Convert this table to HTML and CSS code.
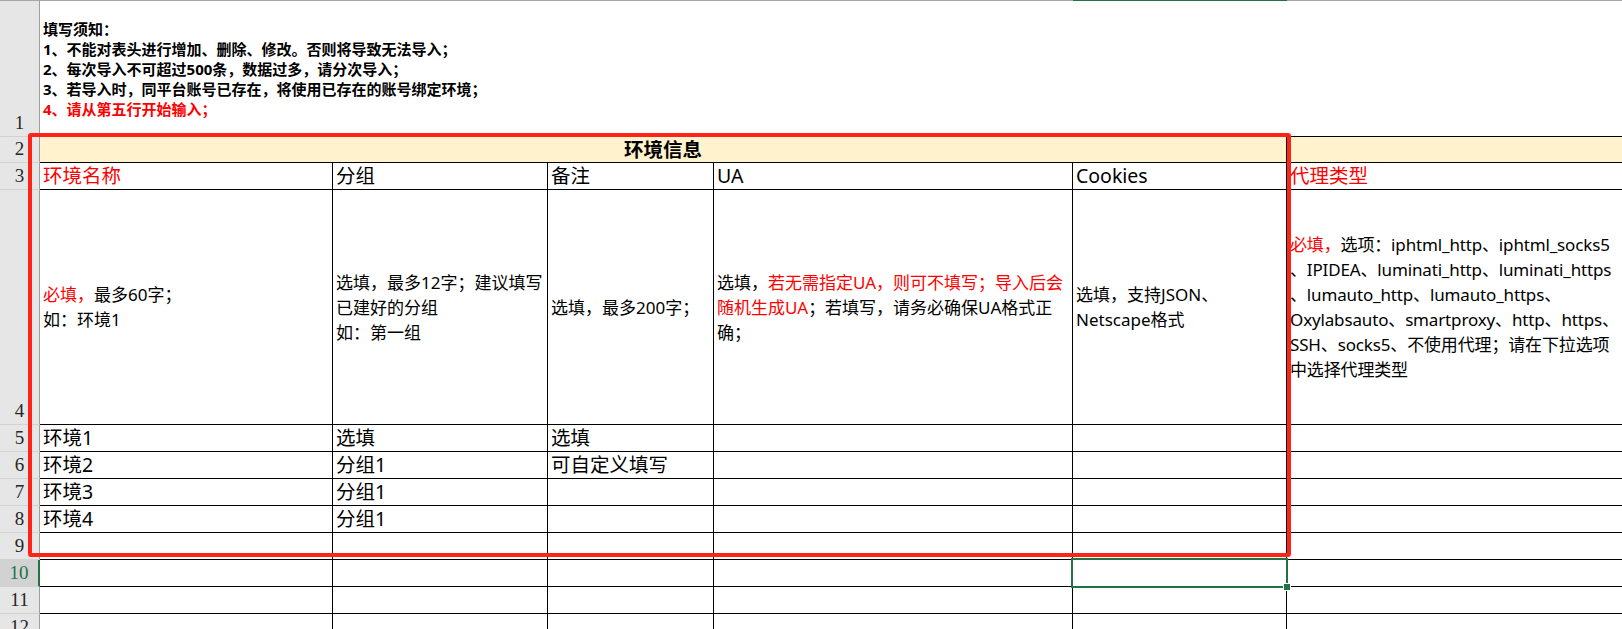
FILE: index.html
```html
<!DOCTYPE html>
<html lang="zh-CN">
<head>
<meta charset="utf-8">
<title>环境导入模板</title>
<link rel="stylesheet" href="styles.css">
</head>
<body>
<div class="sheet-wrap">
  <div class="sheet">
    <!-- column header bottom line -->
    <div class="topline"></div>
    <div class="topline"></div>
    <div class="topline"></div>
    <div class="topline"></div>
    <div class="topline"></div>
    <div class="topline sel"></div>
    <div class="topline"></div>

    <!-- row 1 -->
    <div class="rh">1</div>
    <div class="notes">
      <div>填写须知：</div>
      <div>1、不能对表头进行增加、删除、修改。否则将导致无法导入；</div>
      <div>2、每次导入不可超过500条，数据过多，请分次导入；</div>
      <div>3、若导入时，同平台账号已存在，将使用已存在的账号绑定环境；</div>
      <div class="red">4、请从第五行开始输入；</div>
    </div>

    <!-- row 2 -->
    <div class="rh">2</div>
    <div class="c title">环境信息</div>
    <div class="c fill"></div>

    <!-- row 3 -->
    <div class="rh">3</div>
    <div class="c red">环境名称</div>
    <div class="c">分组</div>
    <div class="c">备注</div>
    <div class="c">UA</div>
    <div class="c">Cookies</div>
    <div class="c red">代理类型</div>

    <!-- row 4 -->
    <div class="rh">4</div>
    <div class="c desc"><div><span class="red">必填，</span>最多60字；<br>如：环境1</div></div>
    <div class="c desc"><div>选填，最多12字；建议填写<br>已建好的分组<br>如：第一组</div></div>
    <div class="c desc"><div>选填，最多200字；</div></div>
    <div class="c desc"><div>选填，<span class="red">若无需指定UA，则可不填写；导入后会<br>随机生成UA</span>；若填写，请务必确保UA格式正<br>确；</div></div>
    <div class="c desc"><div>选填，支持JSON、<br>Netscape格式</div></div>
    <div class="c desc tight"><div><span class="red">必填，</span>选项：iphtml_http、iphtml_socks5<br>、IPIDEA、luminati_http、luminati_https<br>、lumauto_http、lumauto_https、<br>Oxylabsauto、smartproxy、http、https、<br>SSH、socks5、不使用代理；请在下拉选项<br>中选择代理类型</div></div>

    <!-- row 5 -->
    <div class="rh">5</div>
    <div class="c">环境1</div>
    <div class="c">选填</div>
    <div class="c">选填</div>
    <div class="c"></div>
    <div class="c"></div>
    <div class="c"></div>

    <!-- row 6 -->
    <div class="rh">6</div>
    <div class="c">环境2</div>
    <div class="c">分组1</div>
    <div class="c">可自定义填写</div>
    <div class="c"></div>
    <div class="c"></div>
    <div class="c"></div>

    <!-- row 7 -->
    <div class="rh">7</div>
    <div class="c">环境3</div>
    <div class="c">分组1</div>
    <div class="c"></div>
    <div class="c"></div>
    <div class="c"></div>
    <div class="c"></div>

    <!-- row 8 -->
    <div class="rh">8</div>
    <div class="c">环境4</div>
    <div class="c">分组1</div>
    <div class="c"></div>
    <div class="c"></div>
    <div class="c"></div>
    <div class="c"></div>

    <!-- row 9 -->
    <div class="rh">9</div>
    <div class="c"></div>
    <div class="c"></div>
    <div class="c"></div>
    <div class="c"></div>
    <div class="c"></div>
    <div class="c"></div>

    <!-- row 10 -->
    <div class="rh active">10</div>
    <div class="c"></div>
    <div class="c"></div>
    <div class="c"></div>
    <div class="c"></div>
    <div class="c"></div>
    <div class="c"></div>

    <!-- row 11 -->
    <div class="rh">11</div>
    <div class="c"></div>
    <div class="c"></div>
    <div class="c"></div>
    <div class="c"></div>
    <div class="c"></div>
    <div class="c"></div>

    <!-- row 12 -->
    <div class="rh">12</div>
    <div class="c"></div>
    <div class="c"></div>
    <div class="c"></div>
    <div class="c"></div>
    <div class="c"></div>
    <div class="c"></div>
  </div>

  <div class="redbox"></div>
  <div class="selection"><span class="handle"></span></div>
</div>
</body>
</html>
```

FILE: styles.css
```css
html, body {
  margin: 0;
  padding: 0;
  background: #ffffff;
  overflow: hidden;
}

.sheet-wrap {
  position: relative;
  width: 1622px;
  height: 629px;
  overflow: hidden;
  font-family: "Noto Sans", "Noto Sans CJK SC", sans-serif;
  color: #000;
}

.sheet {
  display: grid;
  grid-template-columns: 40px 293px 215px 166px 359px 214px 340px;
  grid-template-rows: 1px 136px 26px 27px 235px repeat(8, 27px);
}

.sheet > div {
  box-sizing: border-box;
  min-width: 0;
}

.topline {
  background: #a6a6a6;
}

.topline.sel {
  background: #217346;
}

.rh {
  background: #e6e6e6;
  border-right: 1px solid #9e9e9e;
  border-bottom: 1px solid #d2d2d2;
  display: flex;
  align-items: flex-end;
  justify-content: center;
  font-family: "Liberation Serif", serif;
  font-size: 19px;
  line-height: 22px;
  color: #262626;
  padding-bottom: 2px;
}

.rh.active {
  background: #d2d2d2;
  color: #217346;
  border-right: 2px solid #217346;
}

.notes {
  grid-column: 2 / -1;
  border-bottom: 1px solid #000;
  display: flex;
  flex-direction: column;
  justify-content: center;
  padding-left: 3px;
  font-family: "Noto Sans", "Noto Sans CJK SC", sans-serif;
  font-weight: 700;
  font-size: 15px;
  line-height: 20px;
  white-space: nowrap;
}

.c {
  border-right: 1px solid #000;
  border-bottom: 1px solid #000;
  padding: 0 3px 1px 3px;
  display: flex;
  align-items: flex-end;
  font-size: 19.5px;
  line-height: 24px;
  white-space: nowrap;
  overflow: hidden;
}

.title {
  grid-column: 2 / 7;
  background: #fff2cc;
  justify-content: center;
  align-items: center;
  font-weight: 700;
  font-size: 19.5px;
  padding: 0;
}

.fill {
  background: #fff2cc;
}

.desc {
  align-items: center;
  font-size: 17px;
  line-height: 25px;
  padding-bottom: 0;
}

.desc.tight {
  letter-spacing: -0.15px;
}

.red {
  color: #ff0000;
}

.redbox {
  position: absolute;
  left: 28px;
  top: 133px;
  width: 1263px;
  height: 424px;
  box-sizing: border-box;
  border: 4px solid #ff2318;
  border-radius: 3px;
}

.selection {
  position: absolute;
  left: 1071px;
  top: 558px;
  width: 217px;
  height: 30px;
  box-sizing: border-box;
  border: 2px solid #217346;
}

.handle {
  position: absolute;
  right: -5px;
  bottom: -5px;
  width: 6px;
  height: 6px;
  background: #217346;
  border: 1px solid #ffffff;
}
```
